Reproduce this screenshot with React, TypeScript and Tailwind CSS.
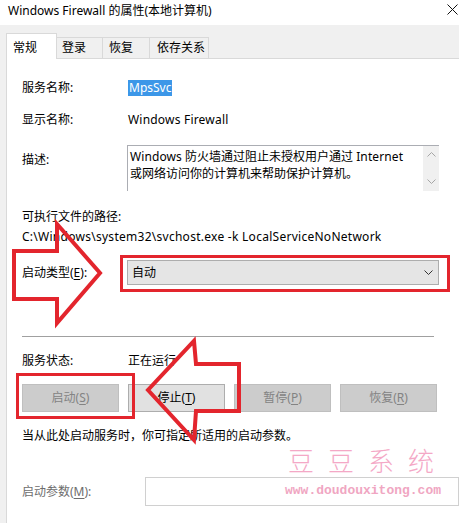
import React from "react";

const U = ({ c }: { c: string }) => <span className="underline underline-offset-2">{c}</span>;

function Chevron({ up, color }: { up?: boolean; color: string }) {
  return (
    <svg width="9" height="5" viewBox="0 0 9 5">
      <polyline
        points={up ? "0.5,4.5 4.5,0.5 8.5,4.5" : "0.5,0.5 4.5,4.5 8.5,0.5"}
        fill="none"
        stroke={color}
        strokeWidth="1"
      />
    </svg>
  );
}

function Btn({ label, k, enabled }: { label: string; k: string; enabled?: boolean }) {
  return (
    <div
      className={
        enabled
          ? "w-[97px] h-[28px] flex items-center justify-center bg-[#e1e1e1] border border-[#adadad] text-black"
          : "w-[97px] h-[28px] flex items-center justify-center bg-[#cccccc] border border-[#bfbfbf] text-[#838383]"
      }
    >
      {label}(<U c={k} />)
    </div>
  );
}

export default function App() {
  return (
    <div className="relative w-[459px] h-[523px] overflow-hidden bg-white text-[12px] leading-[16px] text-black font-['Noto_Sans','Noto_Sans_CJK_SC',sans-serif]">
      {/* title bar */}
      <div className="h-[25px] flex items-center pl-[8px] pb-[3px] relative">
        <span>Windows Firewall 的属性(本地计算机)</span>
        <svg className="absolute left-[447px] top-[4px]" width="11" height="11" viewBox="0 0 11 11">
          <path d="M0.5 0.5 L10.5 10.5 M10.5 0.5 L0.5 10.5" stroke="#111" strokeWidth="1" />
        </svg>
      </div>

      {/* body */}
      <div className="h-[498px] bg-[#f0f0f0] pl-[6px] flex flex-col">
        {/* tabs */}
        <div className="h-[33px] flex items-end relative z-10">
          <div className="w-[51px] h-[26px] mb-[-1px] bg-white border border-b-0 border-[#d9d9d9] pl-[6px] pt-[6px]">常规</div>
          <div className="w-[46px] h-[21px] border border-l-0 border-b-0 border-[#d9d9d9] bg-[#f0f0f0] pl-[5px] pt-[2px]">登录</div>
          <div className="w-[47px] h-[21px] border border-l-0 border-b-0 border-[#d9d9d9] bg-[#f0f0f0] pl-[6px] pt-[2px]">恢复</div>
          <div className="w-[59px] h-[21px] border border-l-0 border-b-0 border-[#d9d9d9] bg-[#f0f0f0] pl-[7px] pt-[2px]">依存关系</div>
        </div>

        {/* panel */}
        <div className="flex-1 bg-white border-l border-t border-[#d9d9d9] pl-[15px] flex flex-col">
          <div className="mt-[21px] h-[16px] flex">
            <div className="w-[106px]">服务名称:</div>
            <span className="bg-[#3c97e8] text-white px-[1px] h-[16px]">MpsSvc</span>
          </div>
          <div className="mt-[16px] h-[16px] flex">
            <div className="w-[106px]">显示名称:</div>
            <span className="tracking-[0.2px]">Windows Firewall</span>
          </div>
          <div className="mt-[17px] h-[46px] flex">
            <div className="w-[105px] pt-[7px]">描述:</div>
            <div className="w-[312px] h-[46px] border-l border-t border-[#abadb3] flex">
              <div className="flex-1 pl-[2px] pt-[2px] leading-[17px]">
                <span className="tracking-[0.1px]">Windows</span> 防火墙通过阻止未授权用户通过{" "}
                <span className="tracking-[0.1px]">Internet</span>
                <br />
                或网络访问你的计算机来帮助保护计算机。
              </div>
              <div className="w-[16px] bg-[#f0f0f0] flex flex-col items-center justify-between pt-[6px] pb-[7px]">
                <Chevron up color="#a6a6a6" />
                <Chevron color="#a6a6a6" />
              </div>
            </div>
          </div>
          <div className="mt-[18px] h-[16px]">可执行文件的路径:</div>
          <div className="mt-[4px] h-[16px] tracking-[0.27px]">C:\Windows\system32\svchost.exe -k LocalServiceNoNetwork</div>
          <div className="mt-[15px] h-[25px] flex items-center">
            <div className="w-[105px]">
              启动类型(<U c="E" />):
            </div>
            <div className="w-[312px] h-[25px] bg-[#e5e5e5] border border-[#adadad] flex items-center justify-between pl-[4px] pr-[5px]">
              <span>自动</span>
              <Chevron color="#333" />
            </div>
          </div>
          <div className="mt-[51px] h-px w-[412px] bg-[#a0a0a0]" />
          <div className="mt-[16px] h-[16px] flex">
            <div className="w-[106px]">服务状态:</div>
            <span>正在运行</span>
          </div>
          <div className="mt-[15px] flex gap-[9px]">
            <Btn label="启动" k="S" />
            <Btn label="停止" k="T" enabled />
            <Btn label="暂停" k="P" />
            <Btn label="恢复" k="R" />
          </div>
          <div className="mt-[16px] h-[16px]">当从此处启动服务时，你可指定所适用的启动参数。</div>
          <div className="mt-[33px] h-[29px] flex items-center">
            <div className="w-[126px] text-[#6d6d6d]">
              启动参数(<U c="M" />):
            </div>
            <div className="w-[320px] h-[29px] border border-[#d0d0d0] bg-white" />
          </div>
        </div>
      </div>

      {/* annotations */}
      <div className="absolute left-[120px] top-[255px] w-[330px] h-[37px] border-[3px] border-[#e3252d]" />
      <div className="absolute left-[16px] top-[373px] w-[119px] h-[46px] border-[3px] border-[#e3252d]" />
      <svg className="absolute left-0 top-0 pointer-events-none" width="459" height="523" viewBox="0 0 459 523">
        <polygon
          points="14,251 57,251 57,224 100,273 57,323 57,299 14,299"
          fill="none"
          stroke="#e3252d"
          strokeWidth="4"
        />
        <polygon
          points="239,364 196,364 194,341 148,390 194,440 196,411 239,411"
          fill="none"
          stroke="#e3252d"
          strokeWidth="4"
        />
      </svg>

      {/* watermark */}
      <div className="absolute left-[288px] top-[443px] text-[26px] leading-[34px] tracking-[14px] text-[#f4a8c6] font-['Noto_Sans_CJK_SC',sans-serif] font-light">
        豆豆系统
      </div>
      <div className="absolute left-[285px] top-[483px] text-[13px] leading-[16px] font-bold text-[#f0a6c2] font-['Liberation_Mono',monospace]">
        www.doudouxitong.com
      </div>
    </div>
  );
}
